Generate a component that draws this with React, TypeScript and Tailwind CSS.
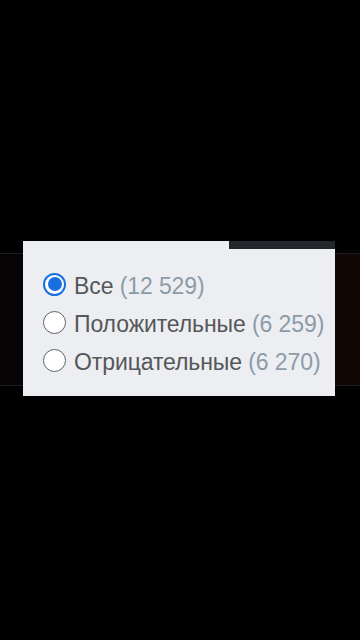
const OPTIONS = [
    { label: "Все", count: "12 529", checked: true },
    { label: "Положительные", count: "6 259", checked: false },
    { label: "Отрицательные", count: "6 270", checked: false },
];

function Radio({ checked }: { checked: boolean }) {
    if (checked) {
        return (
            <span className="flex h-[23px] w-[23px] shrink-0 items-center justify-center rounded-full border-2 border-[#1a6fe0] bg-white">
                <span className="h-[14px] w-[14px] rounded-full bg-[#1a6fe0]" />
            </span>
        );
    }
    return (
        <span className="h-[23px] w-[23px] shrink-0 rounded-full border-[1.5px] border-[#5f6368] bg-white" />
    );
}

export default function App() {
    return (
        <div className="relative h-[640px] w-[360px] overflow-hidden bg-black font-['Liberation_Sans'] antialiased">
            <div className="mt-[253px] h-[133px] border-y border-[#1c1c1c] bg-gradient-to-r from-[#050303] via-[#070404] to-[#120705]" />

            <div className="absolute left-[23px] top-[241px] w-[312px] bg-[#eceef2] pb-[17px] pl-[20px] pt-[24px]">
                <div className="absolute right-0 top-0 h-[8px] w-[106px] bg-[#23272b]" />
                <div className="flex flex-col">
                    {OPTIONS.map((o) => (
                        <label key={o.label} className="flex h-[38px] items-center gap-[8px] text-[23px] leading-none tracking-[-0.1px]">
                            <Radio checked={o.checked} />
                            <span className="pt-[5px] text-[#555759]">
                                {o.label} <span className="text-[#8c9ba8]">({o.count})</span>
                            </span>
                        </label>
                    ))}
                </div>
            </div>
        </div>
    );
}
